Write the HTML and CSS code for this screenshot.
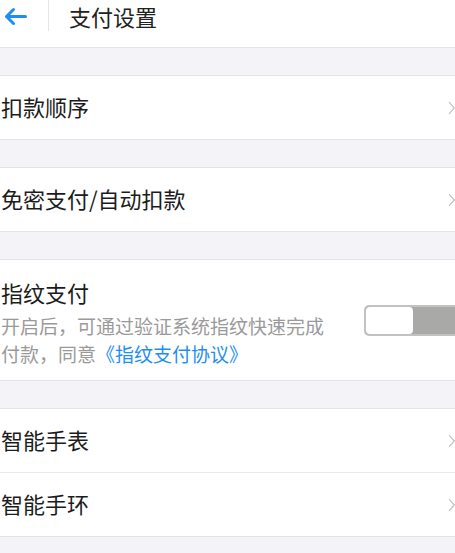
FILE: index.html
```html
<!DOCTYPE html>
<html lang="zh-CN">
<head>
<meta charset="utf-8">
<title>支付设置</title>
<link rel="stylesheet" href="styles.css">
</head>
<body>
<div class="page">
  <header class="header">
    <div class="back">
      <svg width="23" height="19" viewBox="0 0 23 19">
        <path d="M21.5 9.5 H2.5 M9.5 2.5 L2.5 9.5 L9.5 16.5" fill="none" stroke="#1e8ff0" stroke-width="3" stroke-linecap="round" stroke-linejoin="round"/>
      </svg>
    </div>
    <h1 class="title">支付设置</h1>
  </header>

  <section class="group">
    <div class="row"><span class="label">扣款顺序</span><span class="chev"><svg width="10" height="20" viewBox="0 0 10 20"><path d="M1.5 1.5 L9 10 L1.5 18.5" fill="none" stroke="#c4c4c8" stroke-width="1.8"/></svg></span></div>
  </section>

  <section class="group">
    <div class="row"><span class="label">免密支付/自动扣款</span><span class="chev"><svg width="10" height="20" viewBox="0 0 10 20"><path d="M1.5 1.5 L9 10 L1.5 18.5" fill="none" stroke="#c4c4c8" stroke-width="1.8"/></svg></span></div>
  </section>

  <section class="group">
    <div class="row finger">
      <div class="finger-text">
        <div class="label finger-title">指纹支付</div>
        <p class="desc"><span class="line">开启后，可通过验证系统指纹快速完成</span><span class="line">付款，同意<span class="link">《指纹支付协议》</span></span></p>
      </div>
      <div class="toggle"><div class="thumb"></div></div>
    </div>
  </section>

  <section class="group">
    <div class="row"><span class="label">智能手表</span><span class="chev"><svg width="10" height="20" viewBox="0 0 10 20"><path d="M1.5 1.5 L9 10 L1.5 18.5" fill="none" stroke="#c4c4c8" stroke-width="1.8"/></svg></span></div>
    <div class="row split"><span class="label">智能手环</span><span class="chev"><svg width="10" height="20" viewBox="0 0 10 20"><path d="M1.5 1.5 L9 10 L1.5 18.5" fill="none" stroke="#c4c4c8" stroke-width="1.8"/></svg></span></div>
  </section>
</div>
</body>
</html>
```

FILE: styles.css
```css
html, body {
  margin: 0;
  padding: 0;
  background: #f4f4f8;
  overflow: hidden;
}
body {
  font-family: "Noto Sans CJK SC", "Noto Sans", sans-serif;
  color: #1c1c1c;
}
.page {
  width: 455px;
  height: 553px;
  overflow: hidden;
}
.header {
  display: flex;
  align-items: flex-start;
  height: 47px;
  background: #fff;
  border-bottom: 1px solid #e4e4e6;
}
.back {
  width: 44px;
  height: 31px;
  padding-left: 4px;
  display: flex;
  align-items: center;
  border-right: 1px solid #e6e6e6;
}
.back svg {
  display: block;
  margin-top: 1px;
}
.title {
  margin: 0 0 0 20px;
  font-size: 22px;
  font-weight: 400;
  line-height: 32px;
  color: #222;
}
.group {
  margin-top: 27px;
  background: #fff;
  border-top: 1px solid #e4e4e6;
  border-bottom: 1px solid #e4e4e6;
}
.row {
  display: flex;
  align-items: center;
  justify-content: space-between;
  height: 63px;
  box-sizing: border-box;
  padding: 0 0 4px 1px;
}
.row.split {
  border-top: 1px solid #e8e8ea;
  height: 64px;
}
.label {
  font-size: 22px;
  line-height: 30px;
}
.chev {
  display: flex;
  width: 7px;
  margin-top: 4px;
  overflow: visible;
}
.chev svg {
  display: block;
}
.row.finger {
  height: 120px;
  padding: 0 0 0 1px;
  align-items: flex-start;
  justify-content: flex-start;
}
.finger-text {
  flex: 0 0 363px;
  padding-top: 17px;
}
.finger-title {
  display: block;
}
.desc {
  margin: 5px 0 0;
  width: 340px;
  font-size: 19px;
  line-height: 28px;
  color: #9a9a9a;
}
.line {
  display: block;
  white-space: nowrap;
}
.link {
  color: #1e8ff0;
}
.toggle {
  flex: 0 0 auto;
  align-self: center;
  width: 100px;
  height: 27px;
  border: 2px solid #c2c2c2;
  border-radius: 5px;
  background: #a9aaa7;
  display: flex;
}
.thumb {
  width: 47px;
  height: 27px;
  background: #fff;
  border-radius: 4px;
}
```
